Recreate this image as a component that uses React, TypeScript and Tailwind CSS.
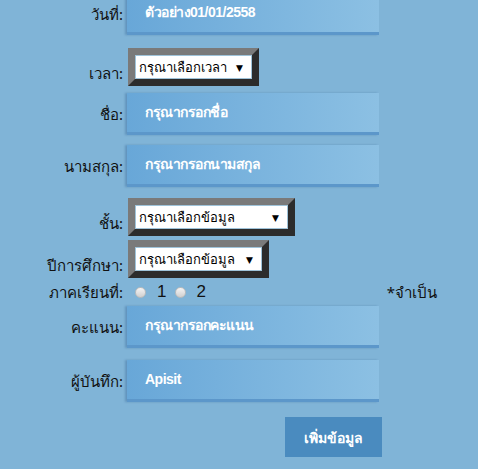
import React from "react";

const labelCls =
  "w-[125px] shrink-0 text-right text-[15px] text-[#111] leading-none pr-[2px]";

const TextRow = ({ label, value, className = "" }: { label: string; value: string; className?: string }) => (
  <div className={`flex items-center ${className}`}>
    <span className={labelCls}>{label}</span>
    <div className="ml-[2px] w-[252px] h-[42px] flex items-center pl-[18px] border-b-[3px] border-[#5c97ca] bg-gradient-to-r from-[#68a7d8] to-[#8cc0e3] shadow-[-2px_0_2px_rgba(40,90,140,0.35)]">
      <span className="text-white font-bold text-[14px] tracking-[-0.5px] font-['Liberation_Sans',sans-serif]">{value}</span>
    </div>
  </div>
);

const SelectRow = ({
  label,
  value,
  width,
  className = "",
}: {
  label: string;
  value: string;
  width: string;
  className?: string;
}) => (
  <div className={`flex items-center ${className}`}>
    <span className={`${labelCls} pt-[12px]`}>{label}</span>
    <div
      className={`ml-[3px] ${width} border-[7px] border-t-[#7a7a7a] border-l-[#7a7a7a] border-b-[#2c2c2c] border-r-[#2c2c2c]`}
    >
      <div className="border border-[#9fc3d9] bg-white h-[24px] flex items-center justify-between pl-[3px] pr-[8px]">
        <span className="text-[13px] text-black leading-none">{value}</span>
        <span className="text-[9px] text-black leading-none">▼</span>
      </div>
    </div>
  </div>
);

const Radio = ({ className = "" }: { className?: string }) => (
  <span
    className={`w-[11px] h-[11px] rounded-full bg-gradient-to-b from-[#f4f4f4] to-[#d0d0d0] border border-[#bcbcbc] ${className}`}
  />
);

export default function App() {
  return (
    <div className="w-[478px] h-[469px] overflow-hidden bg-[#80b4d7] font-['Tahoma','Noto_Sans','DejaVu_Sans',sans-serif]">
      <div className="flex flex-col -mt-[7px]">
        <TextRow label="วันที่:" value="ตัวอย่าง01/01/2558" />
        <SelectRow label="เวลา:" value="กรุณาเลือกเวลา" width="w-[131px]" className="mt-[13px]" />
        <TextRow label="ชื่อ:" value="กรุณากรอกชื่อ" className="mt-[7px]" />
        <TextRow label="นามสกุล:" value="กรุณากรอกนามสกุล" className="mt-[10px]" />
        <SelectRow label="ชั้น:" value="กรุณาเลือกข้อมูล" width="w-[167px]" className="mt-[11px]" />
        <SelectRow label="ปีการศึกษา:" value="กรุณาเลือกข้อมูล" width="w-[141px]" className="mt-[4px]" />
        <div className="flex items-center mt-[4px] h-[20px]">
          <span className={labelCls}>ภาคเรียนที่:</span>
          <div className="flex items-center ml-[10px] text-[17px] text-[#111] font-['Liberation_Sans',sans-serif]">
            <Radio />
            <span className="ml-[11px]">1</span>
            <Radio className="ml-[9px]" />
            <span className="ml-[10px]">2</span>
          </div>
          <span className="ml-auto mr-[41px] text-[15px] text-[#111]">*จำเป็น</span>
        </div>
        <TextRow label="คะแนน:" value="กรุณากรอกคะแนน" className="mt-[4px]" />
        <TextRow label="ผู้บันทึก:" value="Apisit" className="mt-[12px]" />
        <div className="flex mt-[15px] pl-[285px]">
          <button className="w-[97px] h-[40px] bg-[#4a8bbf] text-white font-bold text-[14px]">
            เพิ่มข้อมูล
          </button>
        </div>
      </div>
    </div>
  );
}
